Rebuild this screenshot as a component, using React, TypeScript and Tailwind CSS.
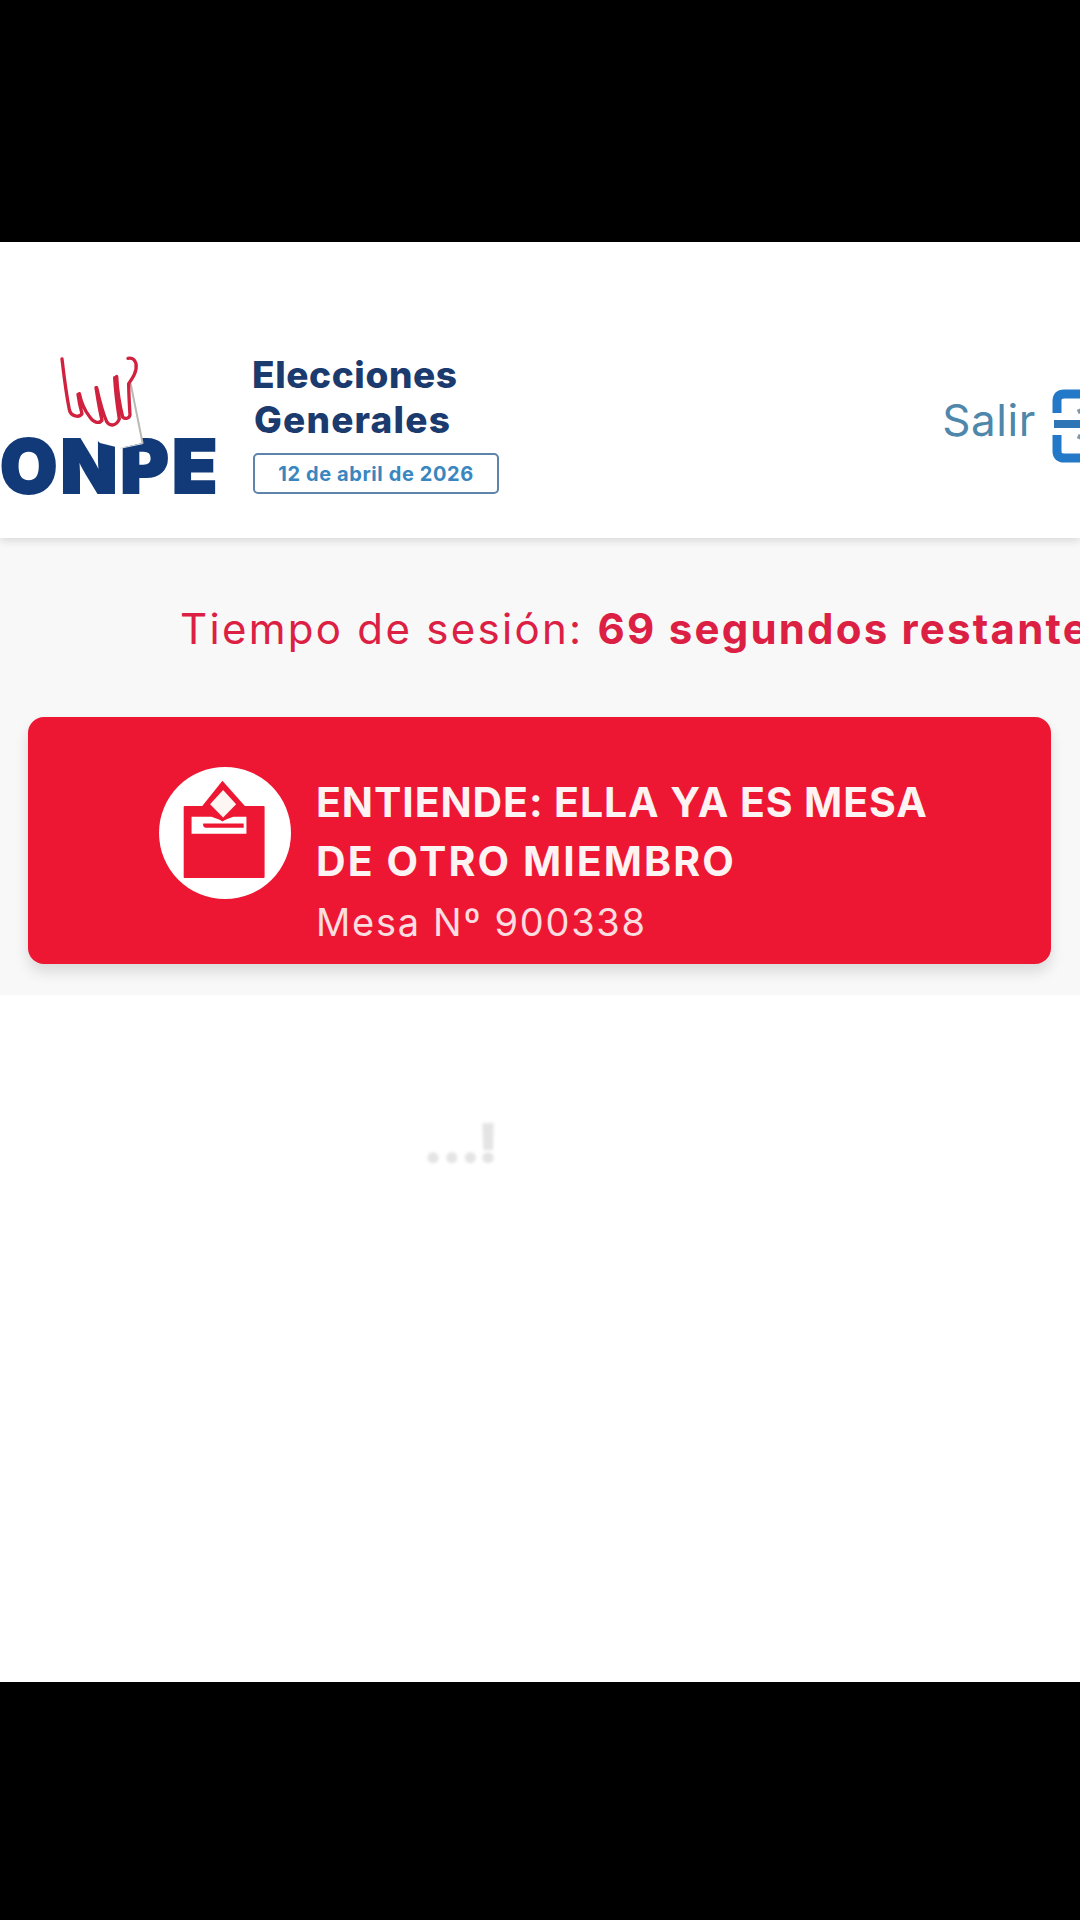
const FONT = "font-['Inter','Liberation_Sans',sans-serif]";

function HandMark() {
  return (
    <svg viewBox="150 370 300 300" className="absolute left-[50px] top-[1px] w-[100px] h-[100px]" fill="none">
      {/* paper sheet */}
      <path d="M215 560 L392 462 L428 640 L360 655 L300 640 Z" fill="#ffffff" />
      <path d="M392 462 L428 642" stroke="#b8b8b4" strokeWidth="6" />
      <path d="M428 642 L360 656" stroke="#e4e4e4" strokeWidth="3" />
      {/* fingers */}
      <path
        d="M186 388 C192 440 198 490 208 540 C212 560 238 566 246 552 C240 530 236 510 234 494 M238 492 C244 520 256 545 268 560 C280 578 296 584 306 572 C298 540 292 500 288 474 M290 474 C298 510 308 550 320 576 C330 592 350 588 358 568 C352 530 346 480 344 444 M350 440 C352 480 360 530 368 562 C376 570 388 566 390 556 C388 520 386 490 386 462 C398 445 412 425 408 402 C404 388 394 384 384 386"
        stroke="#d0223f"
        strokeWidth="10"
        strokeLinecap="round"
        strokeLinejoin="round"
      />
    </svg>
  );
}

function OnpeLogo() {
  return (
    <div className="relative w-[224px] h-[170px] shrink-0">
      <div className="absolute left-0 top-[72px] text-[74px] leading-[84px] font-black tracking-[3px] text-[#123a78] [-webkit-text-stroke:2px_#123a78] font-['Inter',sans-serif]">
        ONPE
      </div>
      <HandMark />
    </div>
  );
}

function BallotIcon() {
  return (
    <svg viewBox="465 205 385 385" className="w-[132px] h-[132px]">
      <path d="M540 322 H770 V526 H540 Z" fill="#ee1733" stroke="#ee1733" strokeWidth="6" strokeLinejoin="round" />
      <path d="M560 350 H618 L650 362 L682 350 H720 V400 H560 Z" fill="#ffffff" />
      <path d="M594 370 H712 V382 H600 Q592 380 594 370 Z" fill="#ee1733" />
      <path d="M650 245 L718 322 L650 364 L590 320 Z" fill="#ee1733" />
      <path d="M652 272 L690 314 L652 352 L614 314 Z" fill="#fdf6f2" />
    </svg>
  );
}

function SalirIcon() {
  return (
    <svg viewBox="0 0 60 76" className="w-[60px] h-[76px] shrink-0" fill="none">
      <path d="M50 7 H12 Q5 7 5 14 V26" stroke="#2478c8" strokeWidth="9" />
      <path d="M5 48 V64 Q5 71 12 71 H50" stroke="#2478c8" strokeWidth="9" />
      <path d="M2 37 H50" stroke="#2f74b5" strokeWidth="8" />
      <path d="M27 22 L29 26 M27 52 L29 48" stroke="#7d98ad" strokeWidth="5" />
    </svg>
  );
}

function Header() {
  return (
    <header className="relative z-10 h-[296px] bg-white shadow-[0_3px_8px_rgba(0,0,0,0.12)] flex items-start overflow-hidden">
      <div className="mt-[110px]">
        <OnpeLogo />
      </div>
      <div className="mt-[110px] ml-[28px] w-[250px] shrink-0">
        <div className="text-[37px] leading-[45px] font-extrabold text-[#1b3a6e]">
          <div className="tracking-[0.6px]">Elecciones</div>
          <div className="pl-[2px] tracking-[1.2px]">Generales</div>
        </div>
        <div className="mt-[11px] ml-[1px] h-[41px] w-[246px] rounded-[5px] border-2 border-[#5f84ab] flex items-center justify-center text-[20px] font-bold tracking-[0.6px] text-[#3a86bf]">
          12 de abril de 2026
        </div>
      </div>
      <div className="ml-auto mr-[-32px] mt-[145px] flex items-center gap-[16px]">
        <span className="mb-[10px] text-[44px] leading-[52px] text-[#4f87ab] tracking-[0.6px]">Salir</span>
        <SalirIcon />
      </div>
    </header>
  );
}

export default function App() {
  return (
    <div className={`w-[1080px] h-[1920px] bg-black flex flex-col overflow-hidden ${FONT}`}>
      <div className="h-[242px] shrink-0" />
      <main className="h-[1440px] shrink-0 bg-white flex flex-col overflow-hidden">
        <Header />
        <section className="h-[457px] shrink-0 bg-[#f8f8f8] pt-[58px]">
          <div className="pl-[180px] h-[64px] flex items-center whitespace-nowrap text-[42px] text-[#dc2044] overflow-hidden">
            <span className="tracking-[2.3px]">Tiempo de sesión:&nbsp;</span>
            <span className="font-bold tracking-[2.2px]">69 segundos restante</span>
          </div>
          <div className="mt-[57px] ml-[28px] mr-[29px] h-[247px] rounded-[16px] bg-[#ee1733] shadow-[0_8px_14px_rgba(0,0,0,0.12)] flex items-start pl-[131px] pt-[50px]">
            <div className="w-[132px] h-[132px] rounded-full bg-white flex items-center justify-center shrink-0">
              <BallotIcon />
            </div>
            <div className="ml-[25px] mt-[6px] text-[#fdf3f3]">
              <div className="text-[41px] leading-[59px] font-bold">
                <div className="tracking-[0.9px]">ENTIENDE: ELLA YA ES MESA</div>
                <div className="tracking-[2.1px]">DE OTRO MIEMBRO</div>
              </div>
              <div className="text-[38px] leading-[62px] tracking-[1.7px] text-[#fbdde0]">Mesa Nº 900338</div>
            </div>
          </div>
        </section>
        <section className="flex-1 pt-[112px] pl-[423px]">
          <div className="text-[54px] leading-[72px] font-black text-[#e4e4e4] blur-[1.5px] tracking-[-1.5px]">...!</div>
        </section>
      </main>
    </div>
  );
}
